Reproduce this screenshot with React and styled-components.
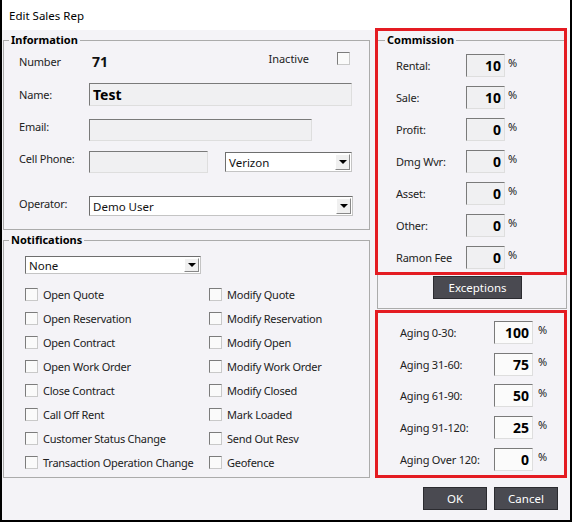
import styled, { createGlobalStyle } from "styled-components";

const Global = createGlobalStyle`
  html, body { margin: 0; padding: 0; background: #fff; }
  body { font-family: "Noto Sans", "Open Sans", sans-serif; color: #1e1e1e; }
  * { box-sizing: border-box; }
`;

const Win = styled.div`
  width: 572px;
  height: 522px;
  border: 2px solid #000;
  border-top: none;
  background: #f4f3f7;
  display: flex;
  flex-direction: column;
`;

const TitleBar = styled.div`
  height: 30px;
  background: #fff;
  display: flex;
  align-items: center;
  padding-left: 7px;
  font-size: 11.5px;
  color: #000;
`;

const Body = styled.div`
  display: flex;
  gap: 7px;
  padding: 2px 0 0 1px;
`;

const LeftCol = styled.div`
  width: 367px;
  display: flex;
  flex-direction: column;
  gap: 2px;
`;

const RightCol = styled.div`
  width: 190px;
  display: flex;
  flex-direction: column;
`;

const Group = styled.fieldset`
  position: relative;
  margin: 0;
  padding: 0;
  min-width: 0;
  border: 1px solid #ababab;
  height: ${(p) => p.$h}px;
`;

const Legend = styled.legend`
  margin-left: ${(p) => p.$ml}px;
  padding: 0 2px;
  font-size: 11px;
  font-weight: 700;
  line-height: 16px;
  color: #000;
`;

const Content = styled.div`
  padding: ${(p) => p.$pad};
  display: flex;
  flex-direction: column;
`;

const Row = styled.div`
  display: flex;
  align-items: center;
  height: ${(p) => p.$h}px;
  margin-top: ${(p) => p.$mt || 0}px;
`;

const Label = styled.span`
  width: ${(p) => p.$w}px;
  flex: none;
  font-size: 11px;
  letter-spacing: -0.2px;
  color: #222;
  white-space: nowrap;
  margin-bottom: ${(p) => p.$up || 0}px;
`;

const BigValue = styled.span`
  font-size: 14px;
  font-weight: 700;
  color: #111;
  margin-left: 3px;
  align-self: flex-end;
  line-height: 16px;
`;

const Inactive = styled.span`
  margin-left: auto;
  align-self: flex-start;
  font-size: 11px;
  line-height: 13px;
  color: #222;
`;

const Box = styled.span`
  flex: none;
  width: 13px;
  height: 13px;
  background: #fafafa;
  border: 1px solid;
  border-color: #7c7c7c #c9c9c9 #c9c9c9 #7c7c7c;
  margin-left: ${(p) => p.$ml || 0}px;
  margin-right: ${(p) => p.$mr || 0}px;
  align-self: ${(p) => (p.$top ? "flex-start" : "center")};
`;

const TextBox = styled.div`
  flex: none;
  width: ${(p) => p.$w}px;
  height: ${(p) => p.$h}px;
  background: ${(p) => p.$bg || "#f0f0f2"};
  border: 1px solid;
  border-color: #7a7a7a #dedede #dedede #7a7a7a;
  display: flex;
  align-items: center;
  justify-content: ${(p) => (p.$right ? "flex-end" : "flex-start")};
  padding: 0 3px;
  font-size: 14px;
  font-weight: 700;
  color: #000;
`;

const Select = styled.div`
  flex: none;
  width: ${(p) => p.$w}px;
  height: ${(p) => p.$h}px;
  margin-left: ${(p) => p.$ml || 0}px;
  background: #fff;
  border: 1px solid;
  border-color: #6e6e6e #c4c4c4 #c4c4c4 #6e6e6e;
  display: flex;
  align-items: center;
  padding: 1px;
  font-size: 11.5px;
  color: #111;
`;

const SelectText = styled.span`
  flex: 1;
  padding-left: 2px;
`;

const DropBtn = styled.span`
  width: 15px;
  height: 100%;
  background: #f0f0f0;
  border: 1px solid;
  border-color: #fff #888 #888 #fff;
  display: flex;
  align-items: center;
  justify-content: center;
  &::after {
    content: "";
    border-left: 4px solid transparent;
    border-right: 4px solid transparent;
    border-top: 4px solid #000;
  }
`;

const Checks = styled.div`
  display: grid;
  grid-template-columns: 184px 1fr;
  grid-auto-rows: 24px;
  margin-top: 8px;
`;

const CheckItem = styled.label`
  display: flex;
  align-items: center;
  font-size: 11px;
  letter-spacing: -0.25px;
  color: #222;
  white-space: nowrap;
  & > span:last-child {
    margin-left: 5px;
  }
`;

const Pct = styled.span`
  font-size: 11px;
  color: #222;
  margin-left: ${(p) => p.$ml}px;
  margin-bottom: 6px;
`;

const DarkBtn = styled.button`
  width: ${(p) => p.$w}px;
  height: 23px;
  background: #4a4a51;
  border: 1px solid #2b2b30;
  color: #fff;
  font-family: inherit;
  font-size: 11.5px;
  padding: 0;
  margin-left: ${(p) => p.$ml || 0}px;
`;

const RedFrame = styled.div`
  position: absolute;
  left: -3px;
  top: -20px;
  width: 192px;
  height: 247px;
  border: 3px solid #e41b22;
  pointer-events: none;
`;

const AgingBox = styled.div`
  margin: 1px 0 0 -2px;
  width: 192px;
  height: 168px;
  border: 3px solid #e41b22;
  padding: 4px 0 0 22px;
  display: flex;
  flex-direction: column;
`;

const Footer = styled.div`
  display: flex;
  justify-content: flex-end;
  gap: 7px;
  margin-top: 9px;
  padding-right: 9px;
`;

const notifications = [
  ["Open Quote", "Modify Quote"],
  ["Open Reservation", "Modify Reservation"],
  ["Open Contract", "Modify Open"],
  ["Open Work Order", "Modify Work Order"],
  ["Close Contract", "Modify Closed"],
  ["Call Off Rent", "Mark Loaded"],
  ["Customer Status Change", "Send Out Resv"],
  ["Transaction Operation Change", "Geofence"],
];

const commission = [
  ["Rental:", "10"],
  ["Sale:", "10"],
  ["Profit:", "0"],
  ["Dmg Wvr:", "0"],
  ["Asset:", "0"],
  ["Other:", "0"],
  ["Ramon Fee", "0"],
];

const aging = [
  ["Aging 0-30:", "100"],
  ["Aging 31-60:", "75"],
  ["Aging 61-90:", "50"],
  ["Aging 91-120:", "25"],
  ["Aging Over 120:", "0"],
];

function Dropdown({ w, h, ml, value }) {
  return (
    <Select $w={w} $h={h} $ml={ml}>
      <SelectText>{value}</SelectText>
      <DropBtn />
    </Select>
  );
}

export default function App() {
  return (
    <>
      <Global />
      <Win>
        <TitleBar>Edit Sales Rep</TitleBar>
        <Body>
          <LeftCol>
            <Group $h={198}>
              <Legend $ml={5}>Information</Legend>
              <Content $pad="4px 0 0 15px">
                <Row $h={18}>
                  <Label $w={70}>Number</Label>
                  <BigValue>71</BigValue>
                  <Inactive>Inactive</Inactive>
                  <Box $ml={28} $mr={19} $top />
                </Row>
                <Row $h={23} $mt={13}>
                  <Label $w={70}>Name:</Label>
                  <TextBox $w={263} $h={23}>Test</TextBox>
                </Row>
                <Row $h={22} $mt={13}>
                  <Label $w={70} $up={8}>Email:</Label>
                  <TextBox $w={223} $h={22} />
                </Row>
                <Row $h={22} $mt={10}>
                  <Label $w={70} $up={8}>Cell Phone:</Label>
                  <TextBox $w={119} $h={22} />
                  <Dropdown w={127} h={20} ml={17} value="Verizon" />
                </Row>
                <Row $h={20} $mt={23}>
                  <Label $w={70} $up={6}>Operator:</Label>
                  <Dropdown w={264} h={20} value="Demo User" />
                </Row>
              </Content>
            </Group>
            <Group $h={246}>
              <Legend $ml={5}>Notifications</Legend>
              <Content $pad="8px 0 0 21px">
                <Dropdown w={176} h={18} value="None" />
                <Checks>
                  {notifications.flat().map((n) => (
                    <CheckItem key={n}>
                      <Box />
                      <span>{n}</span>
                    </CheckItem>
                  ))}
                </Checks>
              </Content>
            </Group>
          </LeftCol>
          <RightCol>
            <Group $h={277}>
              <Legend $ml={7}>Commission</Legend>
              <Content $pad="1px 0 0 18px">
                {commission.map(([l, v]) => (
                  <Row $h={32} key={l}>
                    <Label $w={70}>{l}</Label>
                    <TextBox $w={39} $h={23} $right>
                      {v}
                    </TextBox>
                    <Pct $ml={3}>%</Pct>
                  </Row>
                ))}
                <DarkBtn $w={89} $ml={37} style={{ marginTop: 3 }}>
                  Exceptions
                </DarkBtn>
              </Content>
              <RedFrame />
            </Group>
            <AgingBox>
              {aging.map(([l, v]) => (
                <Row $h={32} key={l}>
                  <Label $w={94}>{l}</Label>
                  <TextBox $w={39} $h={23} $bg="#fbfbfb" $right>
                    {v}
                  </TextBox>
                  <Pct $ml={5}>%</Pct>
                </Row>
              ))}
            </AgingBox>
            <Footer>
              <DarkBtn $w={64}>OK</DarkBtn>
              <DarkBtn $w={64}>Cancel</DarkBtn>
            </Footer>
          </RightCol>
        </Body>
      </Win>
    </>
  );
}
